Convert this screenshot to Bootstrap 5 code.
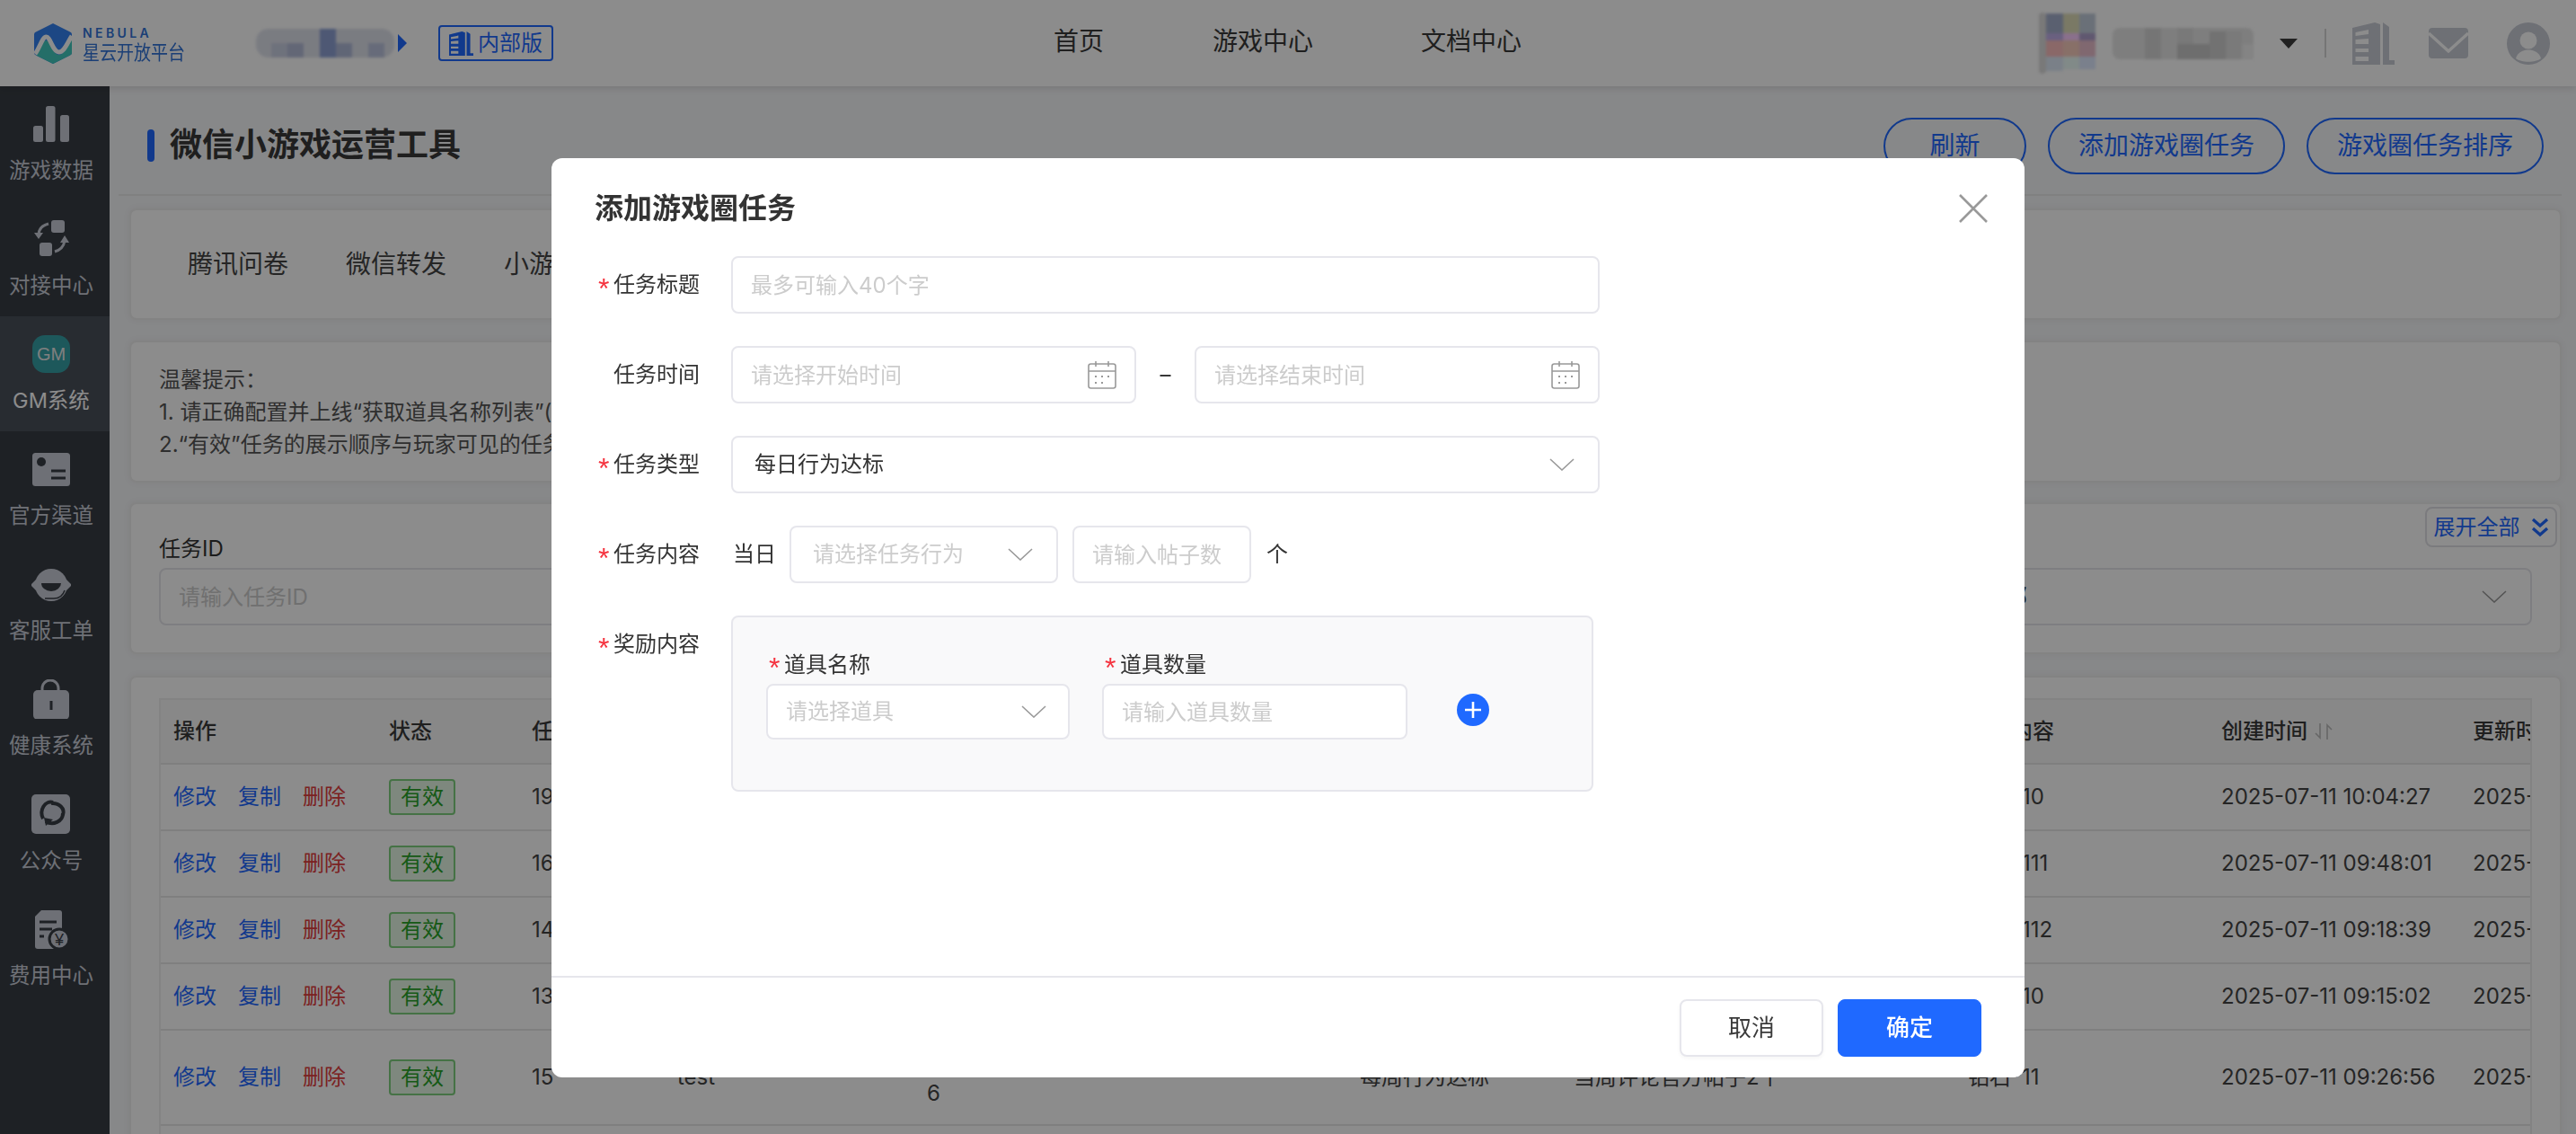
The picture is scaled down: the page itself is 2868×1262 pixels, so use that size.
<!DOCTYPE html>
<html lang="zh-CN">
<head>
<meta charset="utf-8">
<title>微信小游戏运营工具</title>
<link href="https://cdn.jsdelivr.net/npm/bootstrap@5.3.0/dist/css/bootstrap.min.css" rel="stylesheet">
<style>
:root{--brand:#1f69ff;--line:#e6e6ec;--side:#383d44;--ico:#c9cdd8}
html,body{height:1262px;overflow:hidden}
body{font-family:Inter,"Noto Sans CJK SC",sans-serif;font-size:24px;color:#444;background:#f6f7f9;width:2868px}
.blurred{filter:blur(1.5px);flex:none;display:block}
.topbar{height:96px;background:#fff;box-shadow:0 2px 8px rgba(0,0,0,.12);position:relative;z-index:2;padding-left:38px}
.brand-txt{margin-left:12px;color:#3274d8;line-height:1}
.brand-en{font-size:14px;font-weight:600;letter-spacing:3.4px;margin-bottom:4px}
.brand-cn{font-size:19px;letter-spacing:0;transform:scaleY(1.15);transform-origin:top left}
.inner-tag{height:40px;width:128px;border:2px solid var(--brand);border-radius:4px;color:var(--brand);font-size:24px;padding-left:10px;gap:5px;margin-left:35px}
.top-links{position:absolute;left:1173px;top:0;height:96px;font-size:28px;color:#3a3a3a}
.top-links span{display:block;line-height:92px}
.top-right{margin-left:auto;padding-right:29px;color:#c8ccd6}
.vdiv{width:2px;height:32px;background:#d5d5d5;margin-left:30px}
.shell{height:1166px}
.sidenav{width:122px;background:var(--side);color:var(--ico);height:1166px;flex:none}
.side-item{height:128px;padding:20px 8px 0 0;text-align:center;font-size:23.5px}
.side-item.is-on{background:#4a5059;color:#fff}
.side-ico{height:44px;width:44px;margin:0 auto 14px;display:block}
.side-lab{line-height:32px;display:block}
.gm-chip{width:42px;height:42px;border-radius:14px;margin:1px auto 15px;background:#35a0a6;color:#e8e8e8;font:20px/42px "Liberation Sans",sans-serif;text-align:center}
.main-col{padding:10px 16px 0 10px;min-width:0}
.page-head{height:112px;border-bottom:2px solid #eaeaea;padding:2px 20px 0 32px}
.head-bar{width:8px;height:36px;border-radius:4px;background:var(--brand);margin-right:17px}
.head-title{font-size:36px;font-weight:700;color:#3a3a3a;margin:0}
.pill-btn{height:63px;border:2px solid var(--brand);border-radius:32px;color:var(--brand);font-size:28px;background:transparent;padding:0;line-height:1}
.w-a{width:159px}.w-b{width:264px}
.panel{background:#fff;border:2px solid #eee;border-radius:8px;margin-left:12px;box-shadow:0 0 8px rgba(0,0,0,.05)}
.p-tabs{height:124px;margin-top:14px;padding-left:63px;gap:64px;font-size:28px;color:#444;margin-bottom:23px}
.p-tips{height:158px;padding:24px 33px 24px 31px;line-height:36px;color:#555;margin-bottom:22px}
.p-filter{height:169px;padding:34px 31px 0 31px;margin-bottom:24px;position:relative}
.filter-grid{display:grid;grid-template-columns:repeat(4,1fr);column-gap:26px}
.filter-lab{line-height:32px;height:37px;color:#333}
.inp,.pick{height:64px;border:2px solid var(--line);border-radius:8px;font-size:24px;color:#333;box-shadow:none;background-color:#fff}
.inp{padding:0 20px}
.inp::placeholder{color:#ccc;opacity:1}
.pick{padding:0 50px 0 24px;background-image:url("data:image/svg+xml,%3Csvg xmlns='http://www.w3.org/2000/svg' viewBox='0 0 28 14'%3E%3Cpath d='M1 1l13 12L27 1' fill='none' stroke='%23999' stroke-width='1.6'/%3E%3C/svg%3E");background-size:28px 14px;background-position:right 26px center;background-repeat:no-repeat}
.pick.empty{color:#ccc}
.pick-tail{padding-left:29px}
.expand-btn{position:absolute;right:3px;top:3px;width:147px;height:45px;border:2px solid #e0e0e6;border-radius:8px;color:var(--brand);gap:12px;background:#fff;font-size:24px}
.p-table{height:520px;padding:23px 31px 0 31px}
.table-clip{overflow:hidden;height:490px;border:2px solid #eee;border-bottom:0}
.task-table{table-layout:fixed;width:2840px;margin:0;--bs-table-bg:transparent;--bs-table-color:#444;font-size:24px;border-color:#e8e8e8}
.task-table>thead>tr>th{height:71px;background:#f8f8f8;font-weight:500;padding:0 14px;vertical-align:middle;color:#3a3a3a;border-bottom-width:2px}
.task-table>tbody>tr>td{height:74px;padding:0 14px;vertical-align:middle;white-space:nowrap;border-bottom-width:2px}
.task-table>tbody>tr.tall>td{height:106px}
.act{margin-right:24px;color:var(--brand)}
.act.del{color:#e03c3c;margin-right:0}
.ok-tag{display:block;width:74px;height:40px;line-height:36px;text-align:center;border:2px solid #7fd07f;background:#e6f7e6;color:#29a329;border-radius:4px}
.dlg{position:fixed;display:block;--bs-modal-zindex:1055}
.modal-backdrop.dim{--bs-backdrop-opacity:.45}
.dlg .modal-dialog{max-width:1640px;width:1640px;margin:176px auto 0}
.dlg .modal-content{height:1023px;border:0;border-radius:12px;color:#333}
.dlg .modal-header{padding:34px 41px 31px 48px;border:0;height:109px}
.dlg-title{font-size:32px;font-weight:700;line-height:44px;color:#333;margin:0}
.x-btn{border:0;background:none;padding:0;line-height:0;margin-left:auto}
.dlg .modal-body{padding:0;flex:1}
.f-row{display:flex;min-height:64px;margin-bottom:36px}
.f-lab{width:200px;padding-left:52px;display:flex;line-height:64px;flex:none;color:#333}
.need{width:17px;height:64px;color:#f5333f;flex:none;font-family:"Liberation Sans",sans-serif;font-size:32px;padding-top:4px}
.f-ctrl{width:967px;display:flex;align-items:center}
.date-inp{width:451px;flex:none;background-image:url("data:image/svg+xml,%3Csvg xmlns='http://www.w3.org/2000/svg' viewBox='0 0 32 32' fill='none' stroke='%23999' stroke-width='1.6'%3E%3Crect x='1' y='4' width='30' height='27' rx='2.5'/%3E%3Cpath d='M1 12h30M9 1v6M23 1v6'/%3E%3Cpath d='M8 18h2M15 18h2M22 18h2M8 25h2M15 25h2' stroke-width='2'/%3E%3C/svg%3E");background-size:32px 32px;background-position:right 20px center;background-repeat:no-repeat}
.dash{width:65px;text-align:center;flex:none;line-height:1}
.day-txt{width:65px;padding-left:2px;flex:none}
.gift-box{width:960px;height:196px;background:#f9f9fa;border:2px solid var(--line);border-radius:8px;padding:37px 0 0 37px}
.gift-lab{padding-left:3px;line-height:32px;display:flex;margin-bottom:5px}
.gift-lab .need{height:32px;padding-top:3px}
.gift-box .inp{height:62px}
.gift-box .pick{height:62px;padding-left:20px;background-position:right 24px center}
.dlg .modal-footer{padding:23px 48px 22px;border-top:2px solid var(--line);gap:16px;height:113px;justify-content:flex-end}
.dlg .modal-footer>*{margin:0}
.foot-btn{height:64px;width:160px;font-size:26px;border-radius:8px;padding:0;line-height:1}
.foot-cancel{border:2px solid var(--line);background:#fff;color:#3a3a3a;box-shadow:0 2px 4px rgba(0,0,0,.04)}
.foot-ok{--bs-btn-bg:var(--brand);--bs-btn-border-color:var(--brand);font-weight:500}
</style>
</head>
<body>
<svg width="0" height="0" class="position-absolute">
  <symbol id="tower" viewBox="0 0 47 47">
    <path fill="currentColor" fill-rule="evenodd" d="M0 6 25 0 31 2V47H0ZM3.5 11V15L18 13V8ZM3.5 19V24H18V18ZM3.5 29V33H18V29ZM3.5 38V43H18V38Z"/>
    <path fill="currentColor" d="M34 0 41 5V42H47V47H34Z"/>
  </symbol>
</svg>

<header class="topbar d-flex align-items-center">
  <svg width="42" height="45" viewBox="0 0 42 45">
    <defs><clipPath id="hexa"><path d="M21 0 40 9.5a3 3 0 0 1 2 3V33a3 3 0 0 1-2 2.5L21 45 2 35.500a3 3 0 0 1-2-2.500V12.500a3 3 0 0 1 2-3Z"/></clipPath></defs>
    <g clip-path="url(#hexa)">
      <rect width="42" height="45" fill="#3481f0"/>
      <path d="M2 36C7 30 9 19 13.500 19S21 35 27.500 35 38 24 42 17V45H2Z" fill="#42c8be"/>
      <path d="M1 34C6 28 9 15 13.500 15S21 32 27.500 32 37 21 42 14" fill="none" stroke="#fff" stroke-width="5"/>
    </g>
  </svg>
  <div class="brand-txt">
    <div class="brand-en">NEBULA</div>
    <div class="brand-cn">星云开放平台</div>
  </div>
  <svg class="blurred" width="154" height="32" viewBox="0 0 154 32" style="margin-left:79px">
    <rect width="154" height="32" rx="14" fill="#dfe2ec"/>
    <rect x="17" y="16" width="18" height="16" fill="#c9cfe2"/><rect x="35" y="16" width="18" height="16" fill="#b5bcd8"/>
    <rect x="71" y="0" width="18" height="32" fill="#8ea1d4"/><rect x="89" y="16" width="18" height="16" fill="#b0bad8"/><rect x="125" y="16" width="18" height="16" fill="#bcc4de"/>
  </svg>
  <svg width="10" height="20" viewBox="0 0 10 20" class="ms-1"><path d="M0 0 10 10 0 20Z" fill="#1f69ff"/></svg>
  <div class="inner-tag d-flex align-items-center">
    <svg width="27" height="27"><use href="#tower"/></svg><span>内部版</span>
  </div>

  <nav class="top-links d-flex">
    <span style="width:177px">首页</span>
    <span style="width:232px">游戏中心</span>
    <span>文档中心</span>
  </nav>

  <div class="top-right d-flex align-items-center">
    <svg class="blurred" width="64" height="68" viewBox="0 0 64 68">
      <rect width="8" height="68" fill="#dcdcdc" rx="4"/>
      <rect x="8" y="1" width="19" height="22" fill="#a5afcc"/><rect x="27" y="1" width="18" height="22" fill="#deddb9"/><rect x="45" y="1" width="18" height="22" fill="#c1ccda"/>
      <rect x="8" y="23" width="19" height="10" fill="#c1afe9"/><rect x="27" y="23" width="18" height="10" fill="#fbccff"/><rect x="45" y="23" width="18" height="10" fill="#afa0cc"/>
      <rect x="8" y="31" width="19" height="18" fill="#fbbdbd"/><rect x="27" y="31" width="18" height="18" fill="#f7ccbd"/><rect x="45" y="31" width="18" height="18" fill="#e9bdcc"/>
      <rect x="8" y="49" width="19" height="16" fill="#dee9f7"/><rect x="27" y="49" width="18" height="14" fill="#ecfbf7"/><rect x="45" y="49" width="18" height="14" fill="#dee9ff"/>
    </svg>
    <svg class="blurred" width="157" height="35" viewBox="0 0 157 35" style="margin-left:18px">
      <rect width="157" height="35" rx="8" fill="#e6e6e6"/>
      <rect x="36" y="0" width="18" height="35" fill="#d6d6d6"/><rect x="72" y="0" width="18" height="35" fill="#dcdcdc"/><rect x="72" y="18" width="36" height="17" fill="#c8c8c8"/><rect x="108" y="4" width="18" height="31" fill="#cfcfcf"/><rect x="126" y="4" width="18" height="31" fill="#dedede"/><rect x="144" y="18" width="13" height="17" fill="#f0f0f0"/>
    </svg>
    <svg width="20" height="11" viewBox="0 0 20 11" style="margin-left:29px"><path d="M0 0H20L10 11Z" fill="#3c3c3c"/></svg>
    <i class="vdiv"></i>
    <svg width="47" height="47" style="margin-left:29px"><use href="#tower"/></svg>
    <svg width="44" height="34" viewBox="0 0 44 34" style="margin-left:38px"><rect width="44" height="34" rx="4" fill="currentColor"/><path d="M0 6 22 26 44 6" fill="none" stroke="#fff" stroke-width="3.5"/></svg>
    <svg width="48" height="47" viewBox="0 0 48 47" style="margin-left:43px"><ellipse cx="24" cy="23.500" rx="24" ry="23.500" fill="currentColor"/><circle cx="24" cy="20" r="9.500" fill="#fff"/><path d="M10 40C12 33 18 30.500 24 30.500S36 33 38 40C32 45 16 45 10 40Z" fill="#fff"/></svg>
  </div>
</header>

<div class="shell d-flex">
  <aside class="sidenav">
    <div class="side-item">
      <svg class="side-ico" viewBox="0 0 44 44" fill="currentColor"><rect x="2" y="24" width="11" height="18" rx="2.500"/><rect x="16" y="2" width="10.500" height="40" rx="2.500"/><rect x="32" y="12" width="10" height="30" rx="2.500"/></svg>
      <span class="side-lab">游戏数据</span>
    </div>
    <div class="side-item">
      <svg class="side-ico" viewBox="0 0 44 44" fill="currentColor"><rect x="22" y="1" width="15" height="14" rx="3"/><rect x="9" y="26" width="14" height="15" rx="3"/><path d="M19 5C12 7 8 11 8 17M26 36C33 34 36 30 37 24" fill="none" stroke="currentColor" stroke-width="3"/><path d="M3 15 13 15 8 22ZM32 26 42 26 37 18Z"/></svg>
      <span class="side-lab">对接中心</span>
    </div>
    <div class="side-item is-on">
      <div class="gm-chip">GM</div>
      <span class="side-lab">GM系统</span>
    </div>
    <div class="side-item">
      <svg class="side-ico" viewBox="0 0 44 44"><rect x="1" y="4" width="42" height="37" rx="3.500" fill="currentColor"/><circle cx="11" cy="14" r="5" fill="#383d44"/><path d="M22 24H38M22 32H38" stroke="#383d44" stroke-width="3"/></svg>
      <span class="side-lab">官方渠道</span>
    </div>
    <div class="side-item">
      <svg class="side-ico" viewBox="0 0 44 44"><circle cx="22" cy="23" r="18" fill="currentColor"/><path d="M5 17 -1 23 5 29ZM39 17 45 23 39 29Z" fill="currentColor"/><path d="M11 21H33A11 9 0 0 1 11 21Z" fill="#383d44"/><path d="M15 38H25C31 38 35 35 37 29" fill="none" stroke="#383d44" stroke-width="1.500"/></svg>
      <span class="side-lab">客服工单</span>
    </div>
    <div class="side-item">
      <svg class="side-ico" viewBox="0 0 44 44"><path d="M12 15V10A9 9 0 0 1 30 10V15" fill="none" stroke="currentColor" stroke-width="3"/><rect x="2" y="12" width="40" height="33" rx="5" fill="currentColor"/><rect x="20.500" y="24" width="3" height="10" fill="#383d44"/></svg>
      <span class="side-lab">健康系统</span>
    </div>
    <div class="side-item">
      <svg class="side-ico" viewBox="0 0 44 44"><rect x="0" y="0" width="43" height="44" rx="5" fill="currentColor"/><g fill="none" stroke="#383d44" stroke-width="4"><path d="M13 27A10 12 0 0 1 24 9"/><path d="M22 10A12 10 0 0 1 35 23"/><path d="M35 21A12 11 0 0 1 16 30"/></g><path d="M24 28 16 35 14 26Z" fill="#383d44"/></svg>
      <span class="side-lab">公众号</span>
    </div>
    <div class="side-item">
      <svg class="side-ico" viewBox="0 0 44 44"><path d="M11 1H31a3 3 0 0 1 3 3V44H7a3 3 0 0 1-3-3V8Z" fill="currentColor"/><path d="M9 14H28M9 22H23M9 30H14" stroke="#383d44" stroke-width="3"/><circle cx="31" cy="33" r="11" fill="currentColor" stroke="#383d44" stroke-width="3"/><text x="31" y="40" font-size="18" text-anchor="middle" fill="#383d44" font-family="Liberation Sans">¥</text></svg>
      <span class="side-lab">费用中心</span>
    </div>
  </aside>

  <main class="main-col flex-grow-1">
    <div class="page-head d-flex align-items-center">
      <i class="head-bar"></i>
      <h1 class="head-title">微信小游戏运营工具</h1>
      <div class="ms-auto d-flex gap-4">
        <button class="btn pill-btn w-a">刷新</button>
        <button class="btn pill-btn w-b">添加游戏圈任务</button>
        <button class="btn pill-btn w-b">游戏圈任务排序</button>
      </div>
    </div>

    <div class="panel p-tabs d-flex align-items-center">
      <span>腾讯问卷</span><span>微信转发</span><span>小游戏圈</span>
    </div>

    <div class="panel p-tips">
      <div>温馨提示：</div>
      <div>1. 请正确配置并上线“获取道具名称列表”(运营工具配置项)</div>
      <div>2.“有效”任务的展示顺序与玩家可见的任务顺序保持一致</div>
    </div>

    <div class="panel p-filter">
      <button class="btn expand-btn d-flex align-items-center justify-content-center p-0">
        <span>展开全部</span>
        <svg width="20" height="22" viewBox="0 0 20 22" fill="none" stroke="#1f69ff" stroke-width="3.200"><path d="M2 2 10 9 18 2M2 12 10 19 18 12"/></svg>
      </button>
      <div class="filter-grid">
        <div><div class="filter-lab">任务ID</div><input class="form-control inp" placeholder="请输入任务ID"></div>
        <div><div class="filter-lab">任务标题</div><input class="form-control inp" placeholder="请输入任务标题"></div>
        <div><div class="filter-lab">任务类型</div><select class="form-select pick"><option>全部</option></select></div>
        <div><div class="filter-lab">状态</div><select class="form-select pick pick-tail"><option>全部</option></select></div>
      </div>
    </div>

    <div class="panel p-table">
      <div class="table-clip">
        <table class="table task-table">
          <colgroup><col style="width:240px"><col style="width:159px"><col style="width:162px"><col style="width:278px"><col style="width:482px"><col style="width:238px"><col style="width:439px"><col style="width:282px"><col style="width:280px"><col style="width:280px"></colgroup>
          <thead><tr>
            <th>操作</th><th>状态</th><th>任务ID</th><th>任务标题</th><th>任务说明</th><th>任务类型</th><th>任务内容</th><th>奖励内容</th>
            <th><span class="d-flex align-items-center gap-2">创建时间<svg width="20" height="18" viewBox="0 0 20 18" fill="none" stroke="#bbb" stroke-width="1.600"><path d="M6 0V16L1 11M14 18V2L19 7"/></svg></span></th>
            <th>更新时间</th>
          </tr></thead>
          <tbody>
            <tr><td><a class="act text-decoration-none">修改</a><a class="act text-decoration-none">复制</a><a class="act del text-decoration-none">删除</a></td><td><span class="ok-tag">有效</span></td><td>19</td><td>签到</td><td>-</td><td>每日行为达标</td><td>当日浏览帖子1个</td><td>钻石*10</td><td>2025-07-11 10:04:27</td><td>2025-07-11 10:04:27</td></tr>
            <tr><td><a class="act text-decoration-none">修改</a><a class="act text-decoration-none">复制</a><a class="act del text-decoration-none">删除</a></td><td><span class="ok-tag">有效</span></td><td>16</td><td>点赞</td><td>-</td><td>每日行为达标</td><td>当日点赞帖子1个</td><td>钻石*111</td><td>2025-07-11 09:48:01</td><td>2025-07-11 09:48:01</td></tr>
            <tr><td><a class="act text-decoration-none">修改</a><a class="act text-decoration-none">复制</a><a class="act del text-decoration-none">删除</a></td><td><span class="ok-tag">有效</span></td><td>14</td><td>评论</td><td>-</td><td>每日行为达标</td><td>当日评论帖子1个</td><td>钻石*112</td><td>2025-07-11 09:18:39</td><td>2025-07-11 09:18:39</td></tr>
            <tr><td><a class="act text-decoration-none">修改</a><a class="act text-decoration-none">复制</a><a class="act del text-decoration-none">删除</a></td><td><span class="ok-tag">有效</span></td><td>13</td><td>发帖</td><td>-</td><td>每日行为达标</td><td>当日发布帖子1个</td><td>钻石*10</td><td>2025-07-11 09:15:02</td><td>2025-07-11 09:15:02</td></tr>
            <tr class="tall"><td><a class="act text-decoration-none">修改</a><a class="act text-decoration-none">复制</a><a class="act del text-decoration-none">删除</a></td><td><span class="ok-tag">有效</span></td><td>15</td><td>test</td><td>12345<br>6</td><td>每周行为达标</td><td>当周评论官方帖子2个</td><td>钻石*11</td><td>2025-07-11 09:26:56</td><td>2025-07-11 09:26:56</td></tr>
          </tbody>
        </table>
      </div>
    </div>
  </main>
</div>

<div class="modal-backdrop show dim"></div>
<div class="modal dlg" tabindex="-1">
  <div class="modal-dialog">
    <div class="modal-content">
      <div class="modal-header">
        <h5 class="dlg-title">添加游戏圈任务</h5>
        <button class="x-btn" type="button" aria-label="关闭"><svg width="32" height="32" viewBox="0 0 32 32" fill="none" stroke="#999" stroke-width="2.600"><path d="M1 1 31 31M31 1 1 31"/></svg></button>
      </div>
      <div class="modal-body">
        <div class="f-row">
          <div class="f-lab"><span class="need">*</span>任务标题</div>
          <div class="f-ctrl"><input class="form-control inp" placeholder="最多可输入40个字"></div>
        </div>
        <div class="f-row">
          <div class="f-lab"><span class="need"></span>任务时间</div>
          <div class="f-ctrl">
            <input class="form-control inp date-inp" placeholder="请选择开始时间">
            <span class="dash">–</span>
            <input class="form-control inp date-inp" placeholder="请选择结束时间">
          </div>
        </div>
        <div class="f-row">
          <div class="f-lab"><span class="need">*</span>任务类型</div>
          <div class="f-ctrl"><select class="form-select pick"><option>每日行为达标</option></select></div>
        </div>
        <div class="f-row">
          <div class="f-lab"><span class="need">*</span>任务内容</div>
          <div class="f-ctrl">
            <span class="day-txt">当日</span>
            <select class="form-select pick empty flex-none" style="width:299px"><option>请选择任务行为</option></select>
            <input class="form-control inp ms-3 flex-none" style="width:199px" placeholder="请输入帖子数">
            <span style="margin-left:17px">个</span>
          </div>
        </div>
        <div class="f-row">
          <div class="f-lab"><span class="need">*</span>奖励内容</div>
          <div class="gift-box d-flex">
            <div style="width:338px">
              <div class="gift-lab"><span class="need">*</span>道具名称</div>
              <select class="form-select pick empty"><option>请选择道具</option></select>
            </div>
            <div style="width:340px;margin-left:36px">
              <div class="gift-lab"><span class="need">*</span>道具数量</div>
              <input class="form-control inp" placeholder="请输入道具数量">
            </div>
            <svg width="36" height="36" viewBox="0 0 36 36" style="margin:48px 0 0 55px"><circle cx="18" cy="18" r="18" fill="#1f69ff"/><path d="M18 9V27M9 18H27" stroke="#fff" stroke-width="2.600"/></svg>
          </div>
        </div>
      </div>
      <div class="modal-footer">
        <button class="btn foot-btn foot-cancel" type="button">取消</button>
        <button class="btn btn-primary foot-btn foot-ok" type="button">确定</button>
      </div>
    </div>
  </div>
</div>
<script src="https://cdn.jsdelivr.net/npm/bootstrap@5.3.0/dist/js/bootstrap.bundle.min.js"></script>
</body>
</html>
